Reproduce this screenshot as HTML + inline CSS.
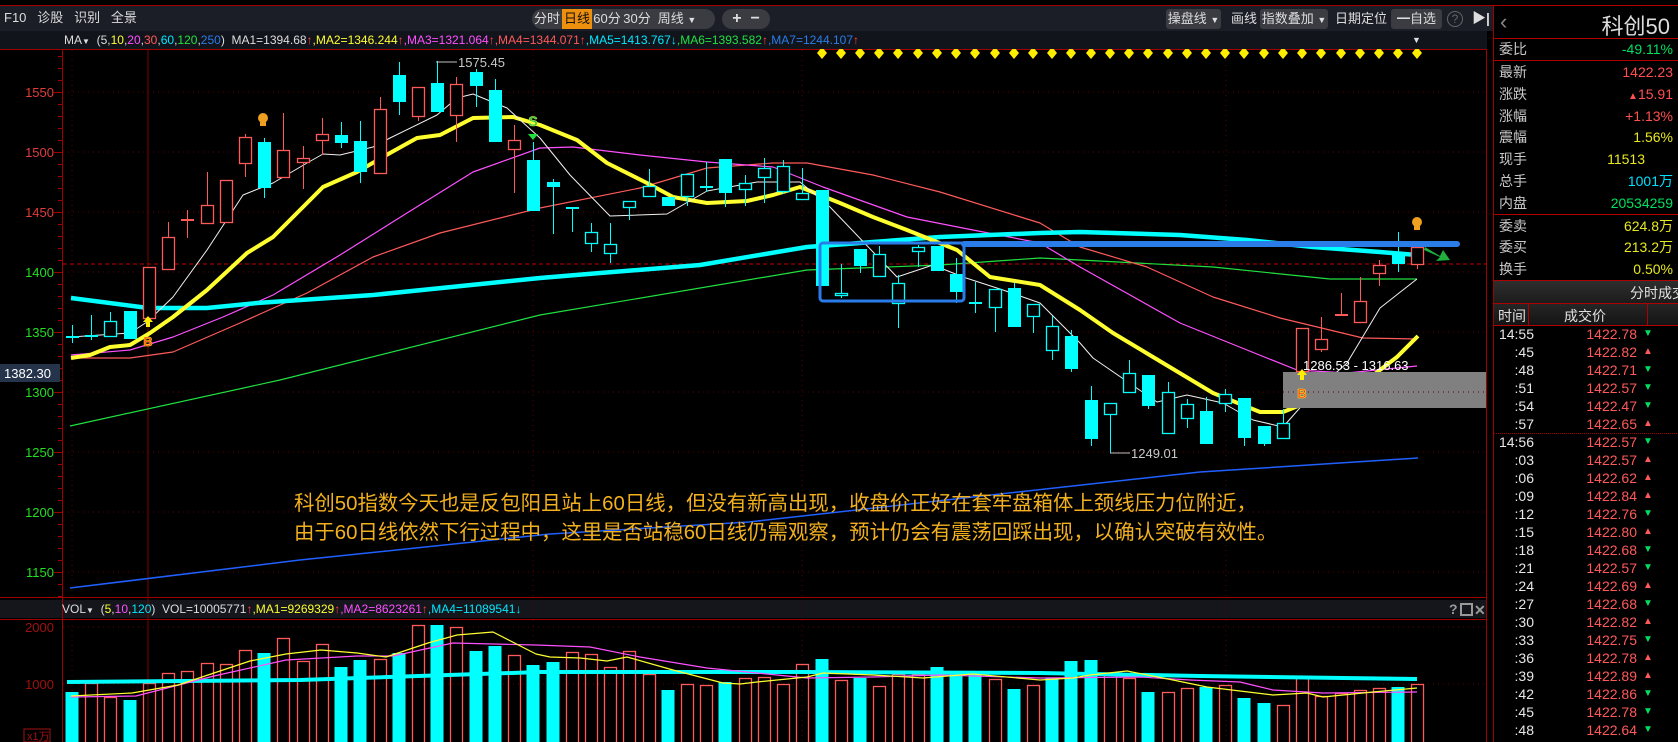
<!DOCTYPE html>
<html><head><meta charset="utf-8">
<style>
*{margin:0;padding:0;box-sizing:border-box}
body{width:1678px;height:742px;background:#000;overflow:hidden;position:relative;font-family:"Liberation Sans","Noto Sans CJK SC",sans-serif;color:#ccc}
.abs{position:absolute}
.tb{position:absolute;top:6px;left:0;width:1493px;height:25px;background:#1b1d27}
.mrow{position:absolute;top:31px;left:0;width:1487px;height:18px;background:#12141c}
.t{position:absolute;font-size:13px;white-space:nowrap;line-height:16px}
.btn{position:absolute;top:9px;height:20px;background:#3b3c42;font-size:13px;line-height:20px;text-align:center;color:#ddd;border-radius:3px}
.rp{position:absolute;left:1493px;top:5px;width:185px;height:737px;border-left:1px solid #a00000;background:#000}
.row{position:absolute;left:0;width:185px;height:21px;font-size:14px;line-height:21px}
.row .l{position:absolute;left:5px;color:#c8c8c8}
.row .v{position:absolute;right:6px}
.hl{position:absolute;left:0;width:185px;height:1px;background:#b00000}
.tr{position:absolute;left:0;width:185px;height:18px;font-size:14px;line-height:18px}
.tr .tm{position:absolute;right:145px;color:#e8e8e8}
.tr .p{position:absolute;right:42px;color:#ff5a5a}
.tr .a{position:absolute;left:149px;font-size:10px}
</style></head><body>
<svg class="abs" style="left:0;top:0" width="1678" height="742" id="sv">
<rect x="0" y="5" width="1678" height="1" fill="#a00000"/>
<rect x="0" y="49" width="1487" height="1" fill="#a00000"/>
<rect x="0" y="597" width="1487" height="1" fill="#a00000"/>
<rect x="0" y="600" width="1487" height="18" fill="#14161c"/>
<rect x="0" y="619" width="1487" height="1" fill="#a00000"/>
<rect x="62" y="50" width="1" height="692" fill="#a00000"/>
<rect x="1486" y="6" width="1" height="736" fill="#a00000"/>
<g stroke="#5a0000" stroke-dasharray="1,4" stroke-width="1">
<line x1="63" y1="92" x2="1486" y2="92"/><line x1="63" y1="152" x2="1486" y2="152"/><line x1="63" y1="212" x2="1486" y2="212"/><line x1="63" y1="272" x2="1486" y2="272"/><line x1="63" y1="332" x2="1486" y2="332"/><line x1="63" y1="392" x2="1486" y2="392"/><line x1="63" y1="452" x2="1486" y2="452"/><line x1="63" y1="512" x2="1486" y2="512"/><line x1="63" y1="572" x2="1486" y2="572"/>
<line x1="63" y1="627" x2="1486" y2="627"/><line x1="63" y1="684" x2="1486" y2="684"/>
<line x1="72" y1="50" x2="72" y2="742"/><line x1="533" y1="50" x2="533" y2="742"/><line x1="802" y1="50" x2="802" y2="742"/><line x1="1226" y1="50" x2="1226" y2="742"/>
</g>
<line x1="63" y1="264" x2="1486" y2="264" stroke="#c00000" stroke-dasharray="4,3"/>
<line x1="148" y1="50" x2="148" y2="742" stroke="#800000"/>
<g id="ticks" stroke="#a00000"></g>
<g font-size="13" text-anchor="end">
<text x="54" y="97" fill="#e03c3c">1550</text><text x="54" y="157" fill="#e03c3c">1500</text><text x="54" y="217" fill="#e03c3c">1450</text>
<text x="54" y="277" fill="#22dd22">1400</text><text x="54" y="337" fill="#22dd22">1350</text><text x="54" y="397" fill="#22dd22">1300</text><text x="54" y="457" fill="#22dd22">1250</text><text x="54" y="517" fill="#22dd22">1200</text><text x="54" y="577" fill="#22dd22">1150</text>
<text x="54" y="632" fill="#a01010">2000</text><text x="54" y="689" fill="#a01010">1000</text>
</g>
<rect x="0" y="364" width="60" height="18" fill="#25344a"/>
<text x="4" y="378" font-size="13" fill="#fff">1382.30</text>
<rect x="24" y="729" width="26" height="13" fill="none" stroke="#a01010"/>
<text x="27" y="740" font-size="11" fill="#a01010">x1万</text>
<g fill="none" stroke-linejoin="round">
<polyline stroke="#2060ff" stroke-width="1.5" points="70,588 300,560 550,534 749,522 1000,494 1200,472 1418,458"/>
<polyline stroke="#20e040" stroke-width="1.2" points="70,426 280,380 540,315 807,270 940,265 1040,258 1080,260 1213,267 1330,279 1417,279"/>
<polyline stroke="#ff5a5a" stroke-width="1.2" points="71,358 130,358 173,352 240,323 307,293 373,257 440,233 540,208 640,188 707,168 773,163 807,163 873,175 940,192 1040,223 1080,247 1147,267 1213,297 1280,318 1363,338 1417,339"/>
<polyline stroke="#ff50ff" stroke-width="1.2" points="71,355 130,350 173,337 223,317 273,295 340,255 407,213 473,172 540,148 573,147 640,155 707,162 773,167 823,187 907,217 973,230 1040,243 1080,267 1180,323 1247,350 1297,370 1347,373 1417,366"/>
<polyline stroke="#00ffff" stroke-width="4.5" points="71,298 148,308 207,308 257,303 373,295 540,278 600,273 700,265 807,247 873,242 940,237 1040,233 1080,232 1180,235 1247,240 1313,247 1380,252 1417,255"/>
<polyline stroke="#ffff30" stroke-width="4" points="71,358 90,355 110,347 130,345 150,333 173,317 207,290 247,253 273,237 323,187 357,172 390,153 417,138 440,135 473,118 513,117 540,125 577,140 607,163 647,183 673,197 707,203 747,201 773,195 800,187 840,203 873,217 907,230 957,250 990,277 1040,285 1080,310 1113,333 1163,363 1213,393 1260,412 1283,412 1313,400 1363,383 1397,357 1418,336"/>
<polyline stroke="#f0f0f0" stroke-width="1" points="71,337 130,333 147,322 173,297 207,250 243,195 273,183 307,163 323,154 340,155 373,147 390,138 437,115 457,98 473,94 507,108 540,138 570,175 610,216 667,214 707,191 757,182 800,182 830,207 897,277 933,265 963,277 1003,290 1040,303 1080,343 1093,358 1157,402 1187,395 1223,403 1253,420 1283,427 1313,393 1347,363 1380,308 1417,279"/>
</g>
<rect x="1283" y="372" width="203" height="36" fill="#808080"/>
<line x1="1283" y1="392" x2="1486" y2="392" stroke="#5a0000" stroke-dasharray="1,4"/>
<g id="cd"></g>
<rect x="820" y="243" width="144" height="58" rx="3" fill="none" stroke="#2a7de8" stroke-width="3"/>
<line x1="964" y1="244" x2="1457" y2="244" stroke="#2a7de8" stroke-width="6" stroke-linecap="round"/>
<polygon points="1425,247 1440,256 1443,250 1450,260 1436,261 1440,257 1424,250" fill="#20b040"/>
<g id="vb"></g>
<g fill="none" stroke-linejoin="round">
<polyline stroke="#00ffff" stroke-width="4" points="67,682 300,680 540,672 800,672 1040,673 1200,676 1417,679"/>
<polyline stroke="#ff50ff" stroke-width="1.2" points="71,697 136,696 214,676 286,660 357,656 393,656 453,643 536,645 590,647 640,657 707,668 757,673 807,678 873,677 940,675 1040,678 1140,677 1190,680 1240,682 1273,690 1323,693 1417,692"/>
<polyline stroke="#ffff30" stroke-width="1.2" points="71,696 132,693 178,685 250,661 286,654 321,650 357,653 386,657 428,643 457,635 493,632 536,654 550,657 580,658 607,661 627,657 673,670 723,683 740,684 757,682 807,677 823,673 873,675 923,678 973,674 1040,680 1073,678 1090,675 1127,671 1173,680 1207,687 1273,695 1307,693 1323,697 1373,692 1417,688"/>
</g>
<line x1="436" y1="62" x2="457" y2="62" stroke="#c0c0c0"/>
<text x="458" y="67" font-size="13" fill="#c8c8c8">1575.45</text>
<line x1="1110" y1="453" x2="1130" y2="453" stroke="#c0c0c0"/>
<text x="1131" y="458" font-size="13" fill="#c8c8c8">1249.01</text>
<text x="1303" y="370" font-size="13" fill="#fff">1286.53 - 1316.63</text>
<g id="dm" fill="#ffee00"></g>
<g fill="#f0a020"><circle cx="263" cy="118" r="5"/><rect x="260" y="122" width="6" height="4"/><circle cx="1417" cy="222" r="5"/><rect x="1414" y="226" width="6" height="4"/></g>
<polygon points="148,316 153,322 150,322 150,327 146,327 146,322 143,322" fill="#ffee00"/>
<text x="148" y="346" font-size="13" font-weight="bold" fill="#ff3030" stroke="#ffee00" stroke-width="0.6" text-anchor="middle">B</text>
<polygon points="1302,369 1307,375 1304,375 1304,380 1300,380 1300,375 1297,375" fill="#ffee00"/>
<text x="1302" y="398" font-size="13" font-weight="bold" fill="#ff3030" stroke="#ffee00" stroke-width="0.6" text-anchor="middle">B</text>
<text x="533" y="126" font-size="14" font-weight="bold" fill="#30c030" stroke="#d0ff60" stroke-width="0.5" text-anchor="middle">S</text>
<polygon points="528,134 538,134 533,140" fill="#20e040"/>
<text x="294" y="510" font-size="20.4" fill="#f2b01e">科创50指数今天也是反包阳且站上60日线，但没有新高出现，收盘价正好在套牢盘箱体上颈线压力位附近，</text>
<text x="294" y="539" font-size="20.4" fill="#f2b01e">由于60日线依然下行过程中，这里是否站稳60日线仍需观察，预计仍会有震荡回踩出现，以确认突破有效性。</text>
<text x="1462" y="46" font-size="12" fill="#888" font-weight="bold">?</text>
<text x="1449" y="614" font-size="14" fill="#999" font-weight="bold">?</text>
<rect x="1461" y="604" width="11" height="11" fill="none" stroke="#999" stroke-width="2"/>
<text x="1474" y="615" font-size="14" fill="#999" font-weight="bold">✕</text>
</svg>

<div class="tb"></div>
<div class="mrow"></div>
<div class="t" style="left:4px;top:10px;color:#ddd">F10&nbsp;&nbsp;&nbsp;诊股&nbsp;&nbsp;&nbsp;识别&nbsp;&nbsp;&nbsp;全景</div>
<div class="btn" style="left:532px;width:183px;border-radius:10px"></div>
<div class="btn" style="left:532px;width:30px;background:none">分时</div>
<div class="btn" style="left:562px;width:30px;background:#ee900e;color:#111;border-radius:0">日线</div>
<div class="btn" style="left:592px;width:30px;background:none">60分</div>
<div class="btn" style="left:622px;width:30px;background:none">30分</div>
<div class="btn" style="left:652px;width:50px;background:none">周线 <span style="font-size:9px">▼</span></div>
<div class="btn" style="left:722px;width:48px;border-radius:10px;font-weight:bold;font-size:16px">+&nbsp;&nbsp;−</div>
<div class="btn" style="left:1166px;width:55px">操盘线 <span style="font-size:9px">▼</span></div>
<div class="t" style="left:1231px;top:11px;color:#ddd">画线</div>
<div class="btn" style="left:1260px;width:68px">指数叠加 <span style="font-size:9px">▼</span></div>
<div class="t" style="left:1335px;top:11px;color:#ddd">日期定位</div>
<div class="btn" style="left:1391px;width:51px">━自选 <span style="font-size:9px">▼</span></div>
<div class="abs" style="left:1447px;top:11px;width:16px;height:16px;border:1px solid #666;border-radius:50%;color:#666;font-size:12px;text-align:center;line-height:15px">?</div>
<div class="t" style="left:1472px;top:10px;color:#ddd;font-weight:bold;font-size:14px">▶|</div>
<div class="t" style="left:64px;top:32px;font-size:12px;color:#ddd">MA<span style="font-size:8px">▼</span>&nbsp;&nbsp;(5,<span style="color:#ffff30">10</span>,<span style="color:#ff50ff">20</span>,<span style="color:#ff5a5a">30</span>,<span style="color:#00e8ff">60</span>,<span style="color:#20e040">120</span>,<span style="color:#2a7de8">250</span>)&nbsp;&nbsp;MA1=1394.68<span style="color:#ff4040">↑</span><span style="color:#ffff30">,MA2=1346.244</span><span style="color:#ff4040">↑</span><span style="color:#ff50ff">,MA3=1321.064</span><span style="color:#ff4040">↑</span><span style="color:#ff5a5a">,MA4=1344.071</span><span style="color:#ff4040">↑</span><span style="color:#00e8ff">,MA5=1413.767↓</span><span style="color:#20e040">,MA6=1393.582</span><span style="color:#ff4040">↑</span><span style="color:#2a7de8">,MA7=1244.107</span><span style="color:#ff4040">↑</span></div>
<div class="t" style="left:62px;top:601px;font-size:12px;color:#ddd">VOL<span style="font-size:8px">▼</span>&nbsp;&nbsp;(<span style="color:#ffff30">5</span>,<span style="color:#ff50ff">10</span>,<span style="color:#00e8ff">120</span>)&nbsp;&nbsp;VOL=10005771<span style="color:#ff4040">↑</span><span style="color:#ffff30">,MA1=9269329</span><span style="color:#ff4040">↑</span><span style="color:#ff50ff">,MA2=8623261</span><span style="color:#ff4040">↑</span><span style="color:#00e8ff">,MA4=11089541↓</span></div>

<div class="rp">
<div class="abs" style="left:0;top:0;width:185px;height:1px;background:#b00000"></div>
<div class="abs" style="left:6px;top:4px;font-size:22px;color:#888">‹</div>
<div class="abs" style="right:8px;top:4px;font-size:22px;color:#ddd">科创50</div>
<div class="hl" style="top:33px"></div>
<div class="row" style="top:34px"><span class="l">委比</span><span class="v" style="color:#00e060">-49.11%</span></div>
<div class="hl" style="top:55px"></div>
<div class="row" style="top:57px"><span class="l">最新</span><span class="v" style="color:#ff5050">1422.23</span></div>
<div class="row" style="top:79px"><span class="l">涨跌</span><span class="v" style="color:#ff5050"><span style="font-size:10px">▲</span>15.91</span></div>
<div class="row" style="top:101px"><span class="l">涨幅</span><span class="v" style="color:#ff5050">+1.13%</span></div>
<div class="row" style="top:122px"><span class="l">震幅</span><span class="v" style="color:#e8e820">1.56%</span></div>
<div class="row" style="top:144px"><span class="l">现手</span><span class="v" style="color:#e8e820;right:34px">11513</span></div>
<div class="row" style="top:166px"><span class="l">总手</span><span class="v" style="color:#00e0ff">1001万</span></div>
<div class="row" style="top:188px"><span class="l">内盘</span><span class="v" style="color:#00e060">20534259</span></div>
<div class="hl" style="top:209px"></div>
<div class="row" style="top:211px"><span class="l">委卖</span><span class="v" style="color:#e8e820">624.8万</span></div>
<div class="row" style="top:232px"><span class="l">委买</span><span class="v" style="color:#e8e820">213.2万</span></div>
<div class="row" style="top:254px"><span class="l">换手</span><span class="v" style="color:#e8e820">0.50%</span></div>
<div class="hl" style="top:275px"></div>
<div class="abs" style="left:0;top:276px;width:185px;height:22px;background:linear-gradient(#2e2e2e,#1c1c1c)"><span class="abs" style="left:136px;top:2px;font-size:14px;color:#e0e0e0;white-space:nowrap">分时成交</span></div>
<div class="hl" style="top:298px"></div>
<div class="abs" style="left:0;top:299px;width:185px;height:21px;background:linear-gradient(#262626,#141414)"><span class="abs" style="left:4px;top:2px;font-size:14px;color:#e0e0e0">时间</span><span class="abs" style="left:34px;top:0;width:1px;height:21px;background:#b00000"></span><span class="abs" style="left:70px;top:2px;font-size:14px;color:#e0e0e0">成交价</span><span class="abs" style="left:153px;top:0;width:1px;height:21px;background:#b00000"></span></div>
<div class="hl" style="top:320px"></div>
<div id="tl"></div>
<div class="abs" style="left:0;top:428px;width:185px;border-top:1px dotted #a00000"></div>
</div>

<script>
var C=[
['xc',337,337,325,343],['xc',336,336,315,340],['h',321,336,312,336],['c',311,339,311,339],['r',267,318,267,318],['r',237,269,222,269],['xr',220,220,210,238],['r',205,223,172,223],['r',180,222,180,222],['r',137,163,134,177],
['c',142,188,138,198],['r',150,177,113,177],['r',158,162,146,189],['r',134,140,118,155],['c',135,143,122,148],['c',141,172,121,183],['r',109,173,97,173],['c',75,102,62,115],['r',87,116,87,121],['c',83,112,61,112],
['r',84,115,77,142],['c',72,86,69,107],['c',90,142,79,142],['r',140,149,125,193],['c',160,211,142,211],['c',182,187,179,234],['xc',208,208,207,232],['h',232,243,223,252],['h',244,253,223,263],['h',201,207,201,220],
['h',186,196,169,196],['c',197,206,197,206],['h',174,196,174,206],['xc',187,187,162,192],['c',159,193,159,207],['h',183,189,175,206],['h',168,177,158,203],['h',166,191,160,194],['h',193,199,168,199],['c',190,286,190,286],
['h',293,295,264,298],['c',249,266,249,273],['h',254,276,246,276],['h',283,303,275,328],['h',247,251,245,267],['c',246,271,246,271],['c',274,292,258,303],['xc',303,303,282,313],['h',289,307,289,332],['c',288,327,283,327],
['h',304,316,304,333],['h',326,350,316,360],['c',336,369,330,372],['c',400,439,386,446],['h',403,414,403,453],['h',373,392,360,392],['c',375,406,375,409],['h',392,433,382,433],['h',404,418,399,428],['c',411,444,397,444],
['h',394,403,389,412],['c',398,438,398,446],['c',426,444,426,446],['h',423,438,409,438],['r',328,371,328,371],['r',339,349,317,352],['xr',315,315,293,315],['r',301,322,277,322],['r',265,273,260,286],['c',253,264,232,272],['r',247,264,247,269]];
var V=[[692,'c'],[683,'r'],[697,'r'],[700,'c'],[683,'r'],[673,'r'],[671,'r'],[663,'r'],[664,'r'],[650,'r'],[653,'c'],[638,'r'],[661,'r'],[644,'r'],[667,'c'],[660,'c'],[659,'r'],[653,'c'],[625,'r'],[625,'c'],[627,'r'],[651,'c'],[646,'c'],[655,'r'],[665,'c'],[662,'c'],[652,'r'],[654,'r'],[667,'r'],[651,'r'],[674,'r'],[690,'c'],[684,'r'],[685,'r'],[682,'c'],[678,'r'],[677,'r'],[684,'r'],[664,'r'],[659,'c'],[680,'r'],[678,'c'],[686,'r'],[674,'r'],[674,'r'],[667,'c'],[674,'c'],[672,'c'],[679,'r'],[689,'c'],[685,'r'],[678,'c'],[661,'c'],[660,'c'],[674,'r'],[678,'r'],[692,'c'],[692,'r'],[688,'r'],[687,'c'],[685,'r'],[698,'c'],[703,'c'],[705,'r'],[677,'r'],[696,'r'],[693,'r'],[690,'r'],[688,'r'],[687,'c'],[684,'r']];
var NS='http://www.w3.org/2000/svg';
function el(p,t,a){var e=document.createElementNS(NS,t);for(var k in a)e.setAttribute(k,a[k]);p.appendChild(e);return e;}
var cd=document.getElementById('cd'),vb=document.getElementById('vb'),dm=document.getElementById('dm'),tk=document.getElementById('ticks');
var RED='#ff5a5a',CY='#00ffff';
C.forEach(function(d,i){var x=Math.round(72+i*19.22)+0.5,t=d[0];var col=(t=='r'||t=='xr')?RED:CY;
el(cd,'line',{x1:x,y1:d[3],x2:x,y2:d[4],stroke:col});
if(t=='xc'||t=='xr'){el(cd,'rect',{x:x-6.5,y:d[1]-1,width:13,height:2,fill:col});}
else if(t=='c'){el(cd,'rect',{x:x-6.5,y:d[1],width:13,height:Math.max(2,d[2]-d[1]),fill:col});}
else{el(cd,'rect',{x:x-6,y:d[1]+0.5,width:12,height:Math.max(1,d[2]-d[1]),fill:'#000',stroke:col,'stroke-width':1.3});}
});
V.forEach(function(d,i){var x=Math.round(72+i*19.22);var top=Math.max(d[0],620);
if(d[1]=='c')el(vb,'rect',{x:x-6.5,y:top,width:13,height:742-top,fill:CY});
else el(vb,'rect',{x:x-5.5,y:top+0.5,width:12,height:745-top,fill:'none',stroke:RED,'stroke-width':1.3});});
for(var i=39;i<=70;i++){var x=Math.round(72+i*19.22);el(dm,'polygon',{points:(x)+',47 '+(x+5)+',53 '+x+',59 '+(x-5)+',53'});}
for(var y=56;y<597;y+=12){el(tk,'line',{x1:(y-92)%60==0?54:58,y1:y+0.5,x2:62,y2:y+0.5});}
var T=[['14:55','1422.78',0],[':45','1422.82',1],[':48','1422.71',0],[':51','1422.57',0],[':54','1422.47',0],[':57','1422.65',1],['14:56','1422.57',0],[':03','1422.57',1],[':06','1422.62',1],[':09','1422.84',1],[':12','1422.76',0],[':15','1422.80',1],[':18','1422.68',0],[':21','1422.57',0],[':24','1422.69',1],[':27','1422.68',0],[':30','1422.82',1],[':33','1422.75',0],[':36','1422.78',1],[':39','1422.89',1],[':42','1422.86',0],[':45','1422.78',0],[':48','1422.64',0]];
var h='';T.forEach(function(r,i){h+='<div class="tr" style="top:'+(320+i*18)+'px"><span class="tm">'+r[0]+'</span><span class="p">'+r[1]+'</span><span class="a" style="color:'+(r[2]?'#ff5a5a':'#00e060')+'">'+(r[2]?'▲':'▼')+'</span></div>';});
document.getElementById('tl').innerHTML=h;
</script>
</body></html>
